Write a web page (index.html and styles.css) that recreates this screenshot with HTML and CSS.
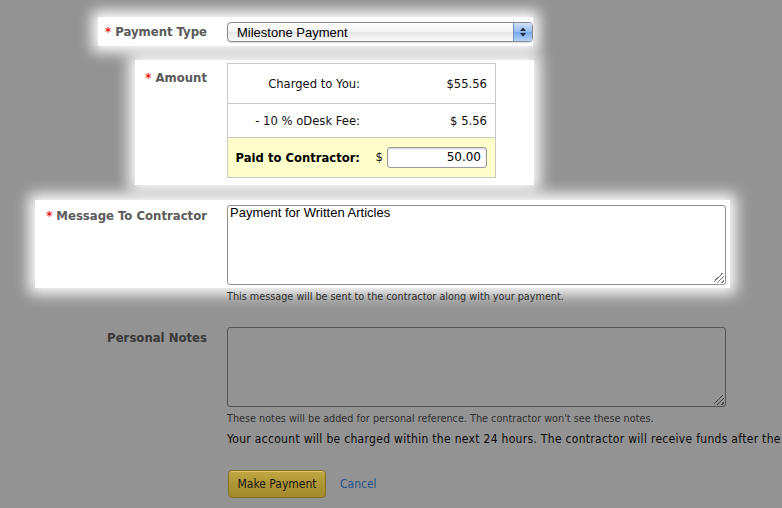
FILE: index.html
```html
<!DOCTYPE html>
<html>
<head>
<meta charset="utf-8">
<link rel="stylesheet" href="styles.css">
</head>
<body>
<form class="form">
  <div class="row row-type">
    <div class="lit lit-type">
      <div class="lbl lbl-type"><span class="req">*</span> Payment Type</div>
      <div class="select">
        <span class="select-text">Milestone Payment</span>
        <span class="select-arrow">
          <svg width="18" height="18" viewBox="0 0 18 18">
            <path d="M6 8 L9 4.5 L12 8 Z" fill="#1c2a3c"/>
            <path d="M6 10 L9 13.5 L12 10 Z" fill="#1c2a3c"/>
          </svg>
        </span>
      </div>
    </div>
  </div>

  <div class="row row-amount">
    <div class="lit lit-amount">
      <div class="lbl lbl-amount"><span class="req">*</span> Amount</div>
      <table class="fees">
        <tr class="fee-row fee-first">
          <td class="fee-name">Charged to You:</td>
          <td class="fee-val">$55.56</td>
        </tr>
        <tr class="fee-row fee-second">
          <td class="fee-name">- 10 % oDesk Fee:</td>
          <td class="fee-val">$ 5.56</td>
        </tr>
        <tr class="fee-row fee-paid">
          <td class="fee-name fee-bold">Paid to Contractor:</td>
          <td class="fee-val"><span class="dollar">$</span><span class="amount-input">50.00</span></td>
        </tr>
      </table>
    </div>
  </div>

  <div class="row row-msg">
    <div class="lit lit-msg">
      <div class="lbl lbl-msg"><span class="req">*</span> Message To Contractor</div>
      <div class="textarea textarea-lit">Payment for Written Articles<span class="grip"></span></div>
    </div>
  </div>
  <div class="hint hint-msg">This message will be sent to the contractor along with your payment.</div>

  <div class="row row-notes">
    <div class="lbl lbl-notes">Personal Notes</div>
    <div class="textarea textarea-dim"><span class="grip grip-dim"></span></div>
  </div>
  <div class="hint hint-notes">These notes will be added for personal reference. The contractor won't see these notes.</div>
  <div class="info">Your account will be charged within the next 24 hours. The contractor will receive funds after the</div>

  <div class="actions">
    <span class="btn">Make Payment</span>
    <a class="cancel" href="#">Cancel</a>
  </div>
</form>
</body>
</html>
```
FILE: styles.css
```css
html, body {
  margin: 0;
  padding: 0;
  width: 782px;
  height: 508px;
  overflow: hidden;
  background: #939393;
}
.form {
  display: flex;
  flex-direction: column;
  padding-top: 17px;
  font-family: "DejaVu Sans", Verdana, sans-serif;
}
.row {
  display: flex;
  align-items: flex-start;
}
.lit {
  display: flex;
  align-items: flex-start;
  background: #fff;
  box-shadow: 0 0 14px 6px #fff;
}
.lbl {
  flex: none;
  text-align: right;
  font-family: "DejaVu Sans Condensed", "DejaVu Sans", sans-serif;
  font-stretch: condensed;
  font-weight: bold;
  font-size: 13px;
  line-height: 20px;
  color: #5a5a5a;
  white-space: nowrap;
}
.req {
  color: #f01818;
}
/* payment type */
.lit-type {
  margin-left: 98px;
  padding: 5px 0 4px 0;
}
.lbl-type { width: 109px; }
.select {
  margin-left: 20px;
  width: 306px;
  height: 20px;
  box-sizing: border-box;
  border: 1px solid #8a8a8a;
  border-radius: 4px;
  background: linear-gradient(#ffffff, #f2f2f2 50%, #e6e6e6 51%, #fafafa);
  display: flex;
  align-items: center;
  justify-content: space-between;
  overflow: hidden;
  box-shadow: 0 1px 1px rgba(0,0,0,0.15);
}
.select-text {
  font-family: "Liberation Sans", Arial, sans-serif;
  font-size: 13px;
  color: #000;
  padding-left: 9px;
}
.select-arrow {
  width: 18px;
  height: 18px;
  border-left: 1px solid #6d8fc0;
  background: linear-gradient(#d0e2fb, #94bbee 50%, #74a7ea 51%, #b2d2fb);
  display: flex;
}
/* amount */
.lit-amount {
  margin-top: 14px;
  margin-left: 135px;
  width: 399px;
  padding: 3px 0 7px 0;
}
.lbl-amount {
  width: 72px;
  padding-top: 5px;
}
.fees {
  margin-left: 20px;
  width: 269px;
  border-collapse: collapse;
  border: 1px solid #c8c8c8;
  font-size: 11.6px;
  color: #111;
}
.fee-row td {
  border-bottom: 1px solid #c8c8c8;
  padding: 0;
}
.fee-first td { height: 39px; }
.fee-second td { height: 33px; }
.fee-paid td { height: 39px; background: #ffffcc; border-bottom: none; }
.fee-name {
  text-align: right;
  width: 132px;
  padding-right: 8px !important;
}
.fee-val {
  text-align: right;
  padding-right: 8px !important;
}
.fee-bold {
  font-weight: bold;
  color: #000;
}
.dollar {
  margin-right: 4px;
}
.amount-input {
  display: inline-block;
  vertical-align: middle;
  width: 100px;
  height: 21px;
  box-sizing: border-box;
  border: 1px solid #9a9a9a;
  border-radius: 3px;
  background: #fff;
  box-shadow: inset 0 1px 2px rgba(0,0,0,0.2);
  line-height: 19px;
  padding-right: 5px;
  font-size: 12px;
  color: #000;
}
/* message */
.lit-msg {
  margin-top: 15px;
  margin-left: 35px;
  padding: 5px 4px 3px 0;
}
.lbl-msg {
  width: 172px;
  padding-top: 1px;
}
.textarea {
  position: relative;
  margin-left: 20px;
  width: 499px;
  height: 80px;
  box-sizing: border-box;
  border: 1px solid #8e8e8e;
  border-radius: 3px;
  font-family: "Liberation Sans", Arial, sans-serif;
  font-size: 13px;
  line-height: 14px;
  padding: 0 2px;
  color: #000;
}
.textarea-lit {
  background: #fff;
}
.textarea-dim {
  background: #939393;
  border-color: #545454;
}
.grip {
  position: absolute;
  right: 1px;
  bottom: 1px;
  width: 10px;
  height: 10px;
  background: linear-gradient(135deg, transparent 40%, #777 40%, #777 47%, transparent 47%, transparent 62%, #777 62%, #777 69%, transparent 69%, transparent 84%, #777 84%, #777 91%, transparent 91%);
}
.grip-dim {
  background: linear-gradient(135deg, transparent 40%, #444 40%, #444 47%, transparent 47%, transparent 62%, #444 62%, #444 69%, transparent 69%, transparent 84%, #444 84%, #444 91%, transparent 91%);
}
.hint {
  margin-left: 227px;
  font-family: "DejaVu Sans Condensed", "DejaVu Sans", sans-serif;
  font-stretch: condensed;
  font-size: 10.75px;
  line-height: 14px;
  color: #2e2e2e;
  white-space: nowrap;
}
.hint-msg { margin-top: 2px; }
.hint-notes { margin-top: 5px; }
/* notes */
.row-notes {
  margin-top: 23px;
}
.lbl-notes {
  width: 207px;
  padding-top: 1px;
  color: #383838;
}
.info {
  margin-top: 5px;
  margin-left: 227px;
  font-family: "DejaVu Sans Condensed", "DejaVu Sans", sans-serif;
  font-stretch: condensed;
  font-size: 12px;
  letter-spacing: 0.3px;
  line-height: 16px;
  color: #0a0a0a;
  white-space: nowrap;
}
.actions {
  margin-top: 23px;
  margin-left: 228px;
  display: flex;
  align-items: center;
}
.btn {
  display: inline-block;
  width: 98px;
  height: 28px;
  box-sizing: border-box;
  border: 1px solid #85701f;
  border-radius: 4px;
  background: linear-gradient(#c2a843, #ad9433 55%, #a38a2c);
  box-shadow: inset 0 1px 0 rgba(255,240,170,0.45);
  font-family: "DejaVu Sans Condensed", "DejaVu Sans", sans-serif;
  font-stretch: condensed;
  font-size: 12px;
  line-height: 26px;
  text-align: center;
  color: #161616;
}
.cancel {
  margin-left: 14px;
  font-family: "DejaVu Sans Condensed", "DejaVu Sans", sans-serif;
  font-stretch: condensed;
  font-size: 12px;
  color: #24528a;
  text-decoration: none;
}
```
